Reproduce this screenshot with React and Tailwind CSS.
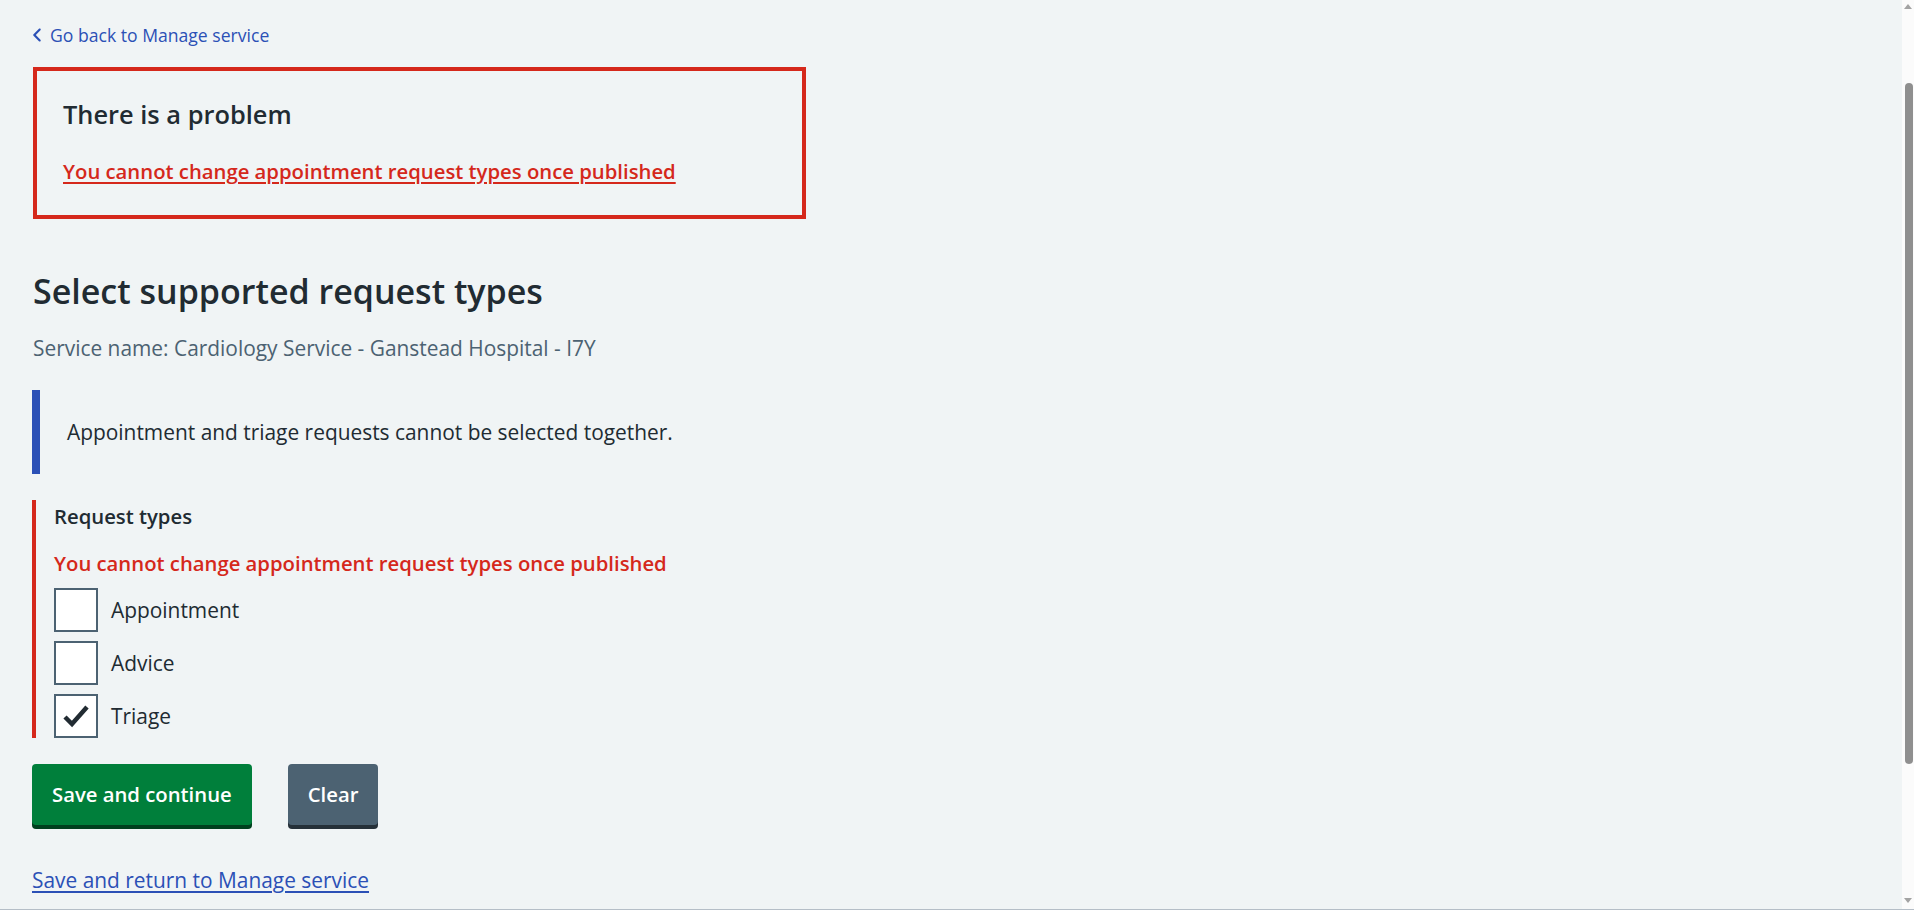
export default function App() {
  return (
    <div className="h-[910px] w-full flex bg-[#f0f4f5] border-b border-[#b5bec7] overflow-hidden font-['Open_Sans',sans-serif] text-[#212b32]">
      <main className="flex-1 pl-[32px] pt-[22px]">
        {/* back link */}
        <a href="#" className="flex items-center h-[26px] text-[17.6px] leading-[26px] text-[#2b50b6] hover:underline">
          <svg className="w-[26px] h-[26px] -ml-[8px] fill-current" viewBox="0 0 24 24" aria-hidden="true">
            <path d="M8.5 12c0-.3.1-.5.3-.7l5-5c.4-.4 1-.4 1.4 0s.4 1 0 1.4L10.9 12l4.3 4.3c.4.4.4 1 0 1.4s-1 .4-1.4 0l-5-5c-.2-.2-.3-.4-.3-.7z" />
          </svg>
          Go back to Manage service
        </a>

        {/* error summary */}
        <div className="mt-[19px] ml-px w-[773px] h-[152px] border-4 border-[#d5281b] pl-[26px] pt-[26px]">
          <h2 className="text-[25.4px] leading-[35px] font-semibold">There is a problem</h2>
          <a href="#" className="block w-fit mt-[24px] text-[20.3px] leading-[30px] font-semibold text-[#d5281b] underline underline-offset-[3px]">
            You cannot change appointment request types once published
          </a>
        </div>

        <h1 className="mt-[50px] ml-px text-[34px] leading-[44px] font-semibold">Select supported request types</h1>
        <p className="mt-[20px] ml-px text-[20.9px] leading-[30px] text-[#4c6272]">
          Service name: Cardiology Service - Ganstead Hospital - I7Y
        </p>

        {/* inset text */}
        <div className="mt-[27px] h-[84px] border-l-8 border-[#2b50b6] pl-[27px] flex items-center">
          <p className="text-[20.9px] leading-[30px]">Appointment and triage requests cannot be selected together.</p>
        </div>

        {/* form group with error */}
        <div className="mt-[26px] border-l-4 border-[#d5281b] pl-[18px] pt-px">
          <p className="text-[20.3px] leading-[30px] font-semibold">Request types</p>
          <p className="mt-[17px] text-[20.3px] leading-[30px] font-semibold text-[#d5281b]">
            You cannot change appointment request types once published
          </p>
          <div className="mt-[10px] flex flex-col gap-[9px]">
            {[
              { label: "Appointment", checked: false },
              { label: "Advice", checked: false },
              { label: "Triage", checked: true },
            ].map((item) => (
              <label key={item.label} className="flex items-center gap-[13px]">
                <span className="w-[44px] h-[44px] border-2 border-[#4c6272] bg-white flex items-center justify-center">
                  {item.checked && (
                    <svg width="40" height="40" viewBox="0 0 40 40" aria-hidden="true">
                      <path d="M9 21 L16 28 L31 11" fill="none" stroke="#212b32" strokeWidth="4.5" />
                    </svg>
                  )}
                </span>
                <span className="text-[20.9px] leading-[30px]">{item.label}</span>
              </label>
            ))}
          </div>
        </div>

        {/* buttons */}
        <div className="mt-[26px] flex gap-[36px]">
          <button className="h-[61px] px-[20px] rounded-[4px] bg-[#007f3b] text-white text-[20.3px] font-semibold shadow-[0_4px_0_#00401e]">
            Save and continue
          </button>
          <button className="h-[61px] px-[20px] rounded-[4px] bg-[#4c6272] text-white text-[20.3px] font-semibold shadow-[0_4px_0_#263139]">
            Clear
          </button>
        </div>

        <a href="#" className="block mt-[41px] text-[20.9px] leading-[28px] text-[#2b50b6] underline underline-offset-[3px] w-fit">
          Save and return to Manage service
        </a>
      </main>

      {/* browser scrollbar */}
      <div className="w-[12px] bg-[#fbfbfb] flex flex-col items-center">
        <svg className="mt-[3px]" width="8" height="6" viewBox="0 0 8 6" aria-hidden="true">
          <path d="M0 6 L4 1 L8 6 Z" fill="#a3a3a3" />
        </svg>
        <div className="mt-[74px] ml-px w-[8px] h-[681px] rounded-full bg-[#8f8f8f]" />
        <div className="flex-1" />
        <svg className="mb-[5px]" width="8" height="6" viewBox="0 0 8 6" aria-hidden="true">
          <path d="M0 0 L8 0 L4 5 Z" fill="#a3a3a3" />
        </svg>
      </div>
    </div>
  );
}
